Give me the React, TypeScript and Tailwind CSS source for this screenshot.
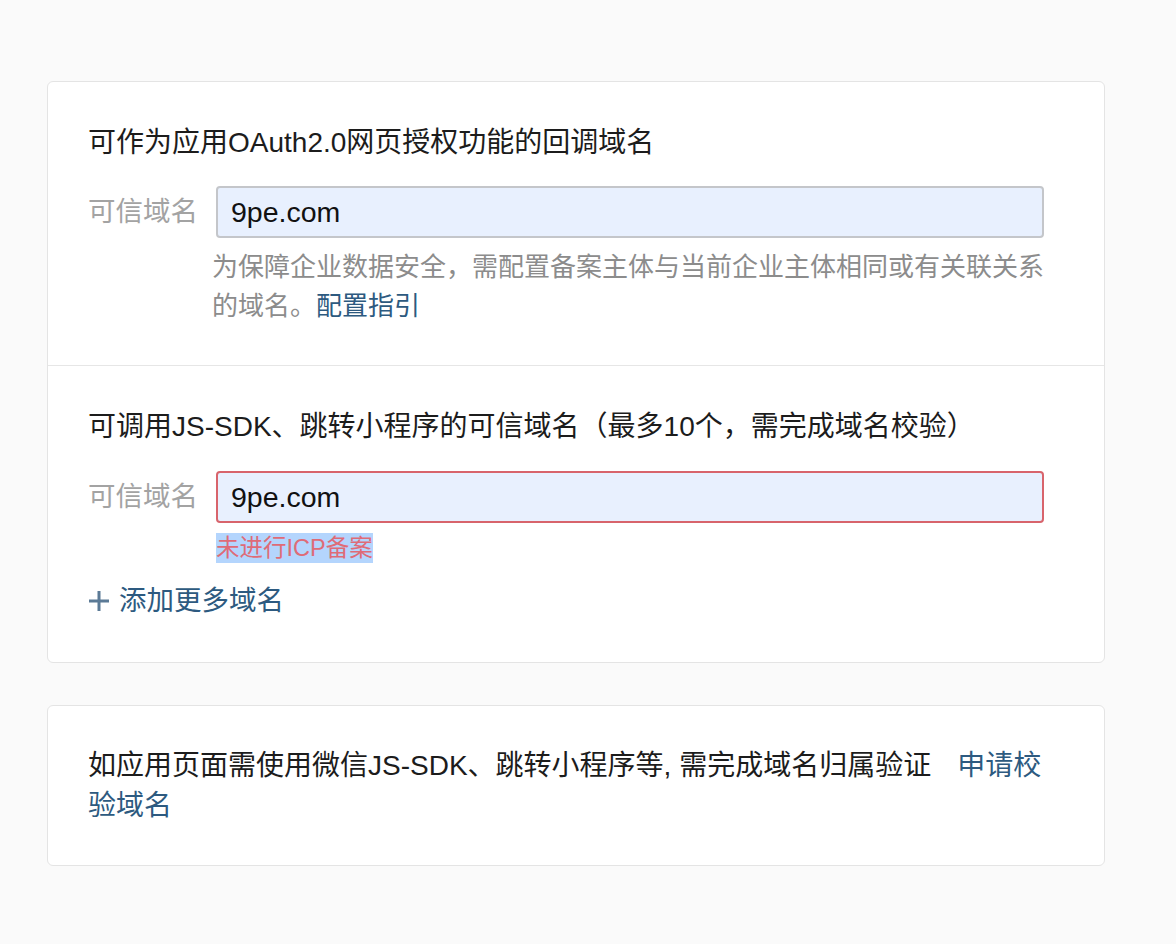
import React from 'react';

const font = "font-['Liberation_Sans','Noto_Sans_CJK_SC',sans-serif]";

function DomainInput({ value, error }: { value: string; error?: boolean }) {
  return (
    <div className="flex items-center">
      <span className="w-[110px] shrink-0 text-[27.5px] leading-[40px] text-[#a3a3a3]">可信域名</span>
      <div
        className={
          'ml-[18px] flex h-[52px] w-[828px] items-center rounded-[4px] border-2 bg-[#e8f0fe] px-[13px] text-[28.5px] text-[#111] ' +
          (error ? 'border-[#d8646c]' : 'border-[#c4c6ca]')
        }
      >
        {value}
      </div>
    </div>
  );
}

export default function App() {
  return (
    <div className={`min-h-[944px] bg-[#fafafa] pt-[81px] pb-[60px] ${font}`}>
      <div className="ml-[47px] w-[1058px] rounded-[6px] border border-[#e4e4e4] bg-white">
        {/* OAuth2.0 回调域名 */}
        <section className="border-b border-[#e6e6e6] pl-[40px] pr-[60px] pt-[41px] pb-[39px]">
          <h3 className="text-[28px] leading-[40px] text-[#1c1c1c]">可作为应用OAuth2.0网页授权功能的回调域名</h3>
          <div className="mt-[23px]">
            <DomainInput value="9pe.com" />
          </div>
          <p className="mt-[10px] whitespace-nowrap pl-[124px] text-[26px] leading-[39px] text-[#8c8c8c]">
            为保障企业数据安全，需配置备案主体与当前企业主体相同或有关联关系
            <br />
            的域名。<a className="text-[#2d5a80]">配置指引</a>
          </p>
        </section>

        {/* JS-SDK 可信域名 */}
        <section className="pl-[40px] pr-[60px] pt-[41px] pb-[41px]">
          <h3 className="text-[28px] leading-[40px] text-[#1c1c1c]">
            可调用JS-SDK、跳转小程序的可信域名（最多10个，需完成域名校验）
          </h3>
          <div className="mt-[24px]">
            <DomainInput value="9pe.com" error />
          </div>
          <div className="mt-[10px] pl-[128px]">
            <span className="inline-block bg-[#b4d5fd] text-[23.5px] leading-[30px] text-[#df6b77]">未进行ICP备案</span>
          </div>
          <button className="mt-[18px] flex items-center text-[27.5px] leading-[40px] text-[#2d5a80]">
            <svg width="22" height="22" viewBox="0 0 22 22" className="mr-[9px]">
              <path d="M11 1v20M1 11h20" stroke="#5b7a96" strokeWidth="3" />
            </svg>
            添加更多域名
          </button>
        </section>
      </div>

      <div className="mt-[42px] ml-[47px] w-[1058px] rounded-[6px] border border-[#e4e4e4] bg-white pl-[40px] pr-[60px] pt-[40px] pb-[39px]">
        <p className="whitespace-nowrap text-[28px] leading-[40px] text-[#1c1c1c]">
          如应用页面需使用微信JS-SDK、跳转小程序等, 需完成域名归属验证
          <a className="ml-[26px] text-[#2d5a80]">
            申请校
            <br />
            验域名
          </a>
        </p>
      </div>
    </div>
  );
}
